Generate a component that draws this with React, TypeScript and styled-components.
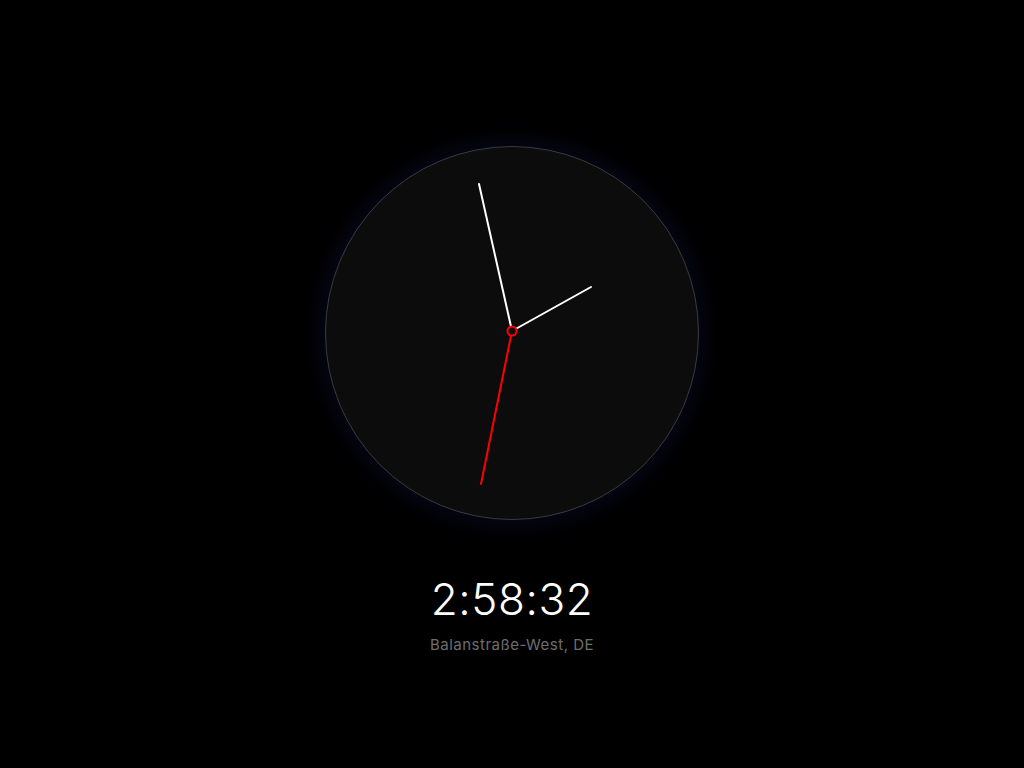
import styled, { createGlobalStyle } from 'styled-components'

const GlobalStyle = createGlobalStyle`
  html, body {
    margin: 0;
    padding: 0;
    background: #000;
  }
`

export default function App() {
  return (
    <Page>
      <GlobalStyle />
      <Face>
        <Hands viewBox="0 0 374 374" width="374" height="374">
          <line x1="187" y1="185" x2="154" y2="38" stroke="#fff" strokeWidth="2" strokeLinecap="round" />
          <line x1="187" y1="185" x2="266" y2="141" stroke="#fff" strokeWidth="2" strokeLinecap="round" />
          <line x1="187" y1="185" x2="156" y2="338" stroke="#f00" strokeWidth="2" strokeLinecap="round" />
          <circle cx="187" cy="185" r="4.5" fill="#0c0c0c" stroke="#f00" strokeWidth="2" />
        </Hands>
      </Face>
      <Time>2:58:32</Time>
      <Place>Balanstraße-West, DE</Place>
    </Page>
  )
}

const Page = styled.div`
  min-height: 100vh;
  box-sizing: border-box;
  padding-top: 146px;
  display: flex;
  flex-direction: column;
  align-items: center;
  background: #000;
  font-family: Inter, "Noto Sans", sans-serif;
`

const Face = styled.div`
  width: 374px;
  height: 374px;
  box-sizing: border-box;
  border-radius: 50%;
  border: 1px solid #3a3a40;
  background: #0c0c0c;
  box-shadow: 0 0 28px rgba(30, 30, 110, 0.35);
  position: relative;
  margin-left: -1px;
`

const Hands = styled.svg`
  position: absolute;
  top: -1px;
  left: -1px;
`

const Time = styled.div`
  margin-top: 53px;
  color: #fff;
  font-size: 44px;
  font-weight: 300;
  line-height: 53px;
  letter-spacing: 0.6px;
`

const Place = styled.div`
  margin-top: 9px;
  color: #6e6e6e;
  font-size: 15px;
  line-height: 20px;
  letter-spacing: 0.5px;
`
